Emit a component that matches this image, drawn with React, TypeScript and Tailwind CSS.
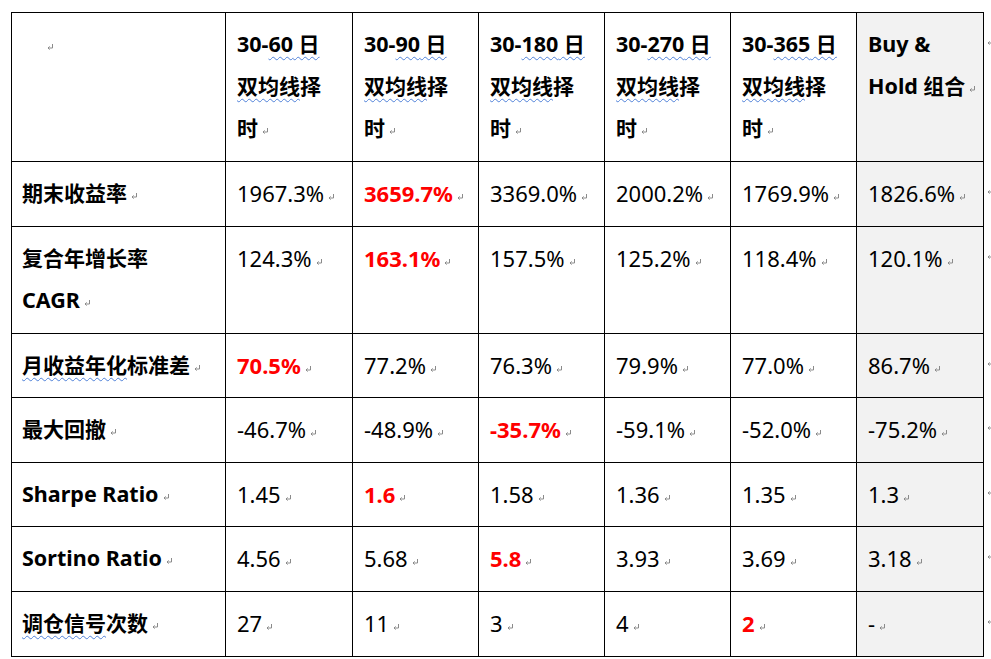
import React from "react";

const Mark = ({ className = "" }: { className?: string }) => (
  <svg
    width="6"
    height="6"
    viewBox="0 0 6 6"
    className={"inline-block " + className}
    fill="none"
    stroke="#8a8a8a"
    strokeWidth="1"
  >
    <path d="M5.5 0 V4 H1" />
    <path d="M2.6 2.4 L1 4 L2.6 5.6" />
  </svg>
);

const W = ({ children }: { children: React.ReactNode }) => (
  <span className="underline decoration-wavy decoration-[#4f81d8] decoration-1 underline-offset-[4px]">
    {children}
  </span>
);

type Val = { v: string; red?: boolean };

const rows: { label: React.ReactNode; vals: Val[] }[] = [
  {
    label: <>期末收益率</>,
    vals: [
      { v: "1967.3%" },
      { v: "3659.7%", red: true },
      { v: "3369.0%" },
      { v: "2000.2%" },
      { v: "1769.9%" },
      { v: "1826.6%" },
    ],
  },
  {
    label: (
      <>
        复合年增长率
        <br />
        <span className="text-[21.5px]">CAGR</span>
      </>
    ),
    vals: [
      { v: "124.3%" },
      { v: "163.1%", red: true },
      { v: "157.5%" },
      { v: "125.2%" },
      { v: "118.4%" },
      { v: "120.1%" },
    ],
  },
  {
    label: (
      <>
        <W>月收益年化</W>标准差
      </>
    ),
    vals: [
      { v: "70.5%", red: true },
      { v: "77.2%" },
      { v: "76.3%" },
      { v: "79.9%" },
      { v: "77.0%" },
      { v: "86.7%" },
    ],
  },
  {
    label: <>最大回撤</>,
    vals: [
      { v: "-46.7%" },
      { v: "-48.9%" },
      { v: "-35.7%", red: true },
      { v: "-59.1%" },
      { v: "-52.0%" },
      { v: "-75.2%" },
    ],
  },
  {
    label: <span className="text-[21.5px]">Sharpe Ratio</span>,
    vals: [
      { v: "1.45" },
      { v: "1.6", red: true },
      { v: "1.58" },
      { v: "1.36" },
      { v: "1.35" },
      { v: "1.3" },
    ],
  },
  {
    label: <span className="text-[21.5px]">Sortino Ratio</span>,
    vals: [
      { v: "4.56" },
      { v: "5.68" },
      { v: "5.8", red: true },
      { v: "3.93" },
      { v: "3.69" },
      { v: "3.18" },
    ],
  },
  {
    label: (
      <>
        <W>调仓信号</W>次数
      </>
    ),
    vals: [
      { v: "27" },
      { v: "11" },
      { v: "3" },
      { v: "4" },
      { v: "2", red: true },
      { v: "-" },
    ],
  },
];

const heads = ["60", "90", "180", "270", "365"];

export default function App() {
  return (
    <div
      className="w-[991px] h-[659px] overflow-hidden bg-white pt-[12px] pl-[11px] flex items-start text-[21px] leading-[42px] text-black"
      style={{ fontFamily: '"Noto Sans", "Noto Sans CJK SC", sans-serif' }}
    >
      <div className="grid grid-cols-[213px_126px_125px_125px_125px_125px_126px] grid-rows-[148px_64px_106px_63px_64px_63px_64px_64px] gap-px bg-black p-px w-fit shrink-0">
        {/* header */}
        <div className="bg-white pl-[35px] pt-[10px]">
          <Mark className="align-[2px]" />
        </div>
        {heads.map((h) => (
          <div key={h} className="bg-white pl-[11px] pt-[10px] font-bold">
            <div>
              <span className="text-[21.5px]">30-</span>
              <W>
                <span className="text-[21.5px]">{h}</span> 日
              </W>
            </div>
            <div>
              <W>双均线</W>择
            </div>
            <div>
              时<Mark className="align-[2px] ml-[4px]" />
            </div>
          </div>
        ))}
        <div className="bg-[#f2f2f2] pl-[11px] pt-[10px] font-bold">
          <div className="text-[21.5px]">Buy &amp;</div>
          <div>
            <span className="text-[21.5px]">Hold</span> 组合
            <Mark className="align-[2px] ml-[4px]" />
          </div>
        </div>

        {rows.map((r, i) => (
          <React.Fragment key={i}>
            <div className="bg-white pl-[10px] pt-[10px] font-bold">
              {r.label}
              <Mark className="align-[2px] ml-[4px]" />
            </div>
            {r.vals.map((c, j) => (
              <div
                key={j}
                className={
                  (j === 5 ? "bg-[#f2f2f2]" : "bg-white") +
                  " pl-[11px] pt-[10px] text-[22px]"
                }
              >
                <span className={c.red ? "text-[#ff0000] font-bold" : ""}>
                  {c.v}
                </span>
                <Mark className="align-[2px] ml-[4px]" />
              </div>
            ))}
          </React.Fragment>
        ))}
      </div>
      <div className="grid grid-rows-[148px_64px_106px_63px_64px_63px_64px_64px] gap-px pt-px shrink-0">
        {Array.from({ length: 8 }).map((_, i) => (
          <div key={i} className="pl-[3px] pt-[10px]">
            <Mark className="align-[7px]" />
          </div>
        ))}
      </div>
    </div>
  );
}
